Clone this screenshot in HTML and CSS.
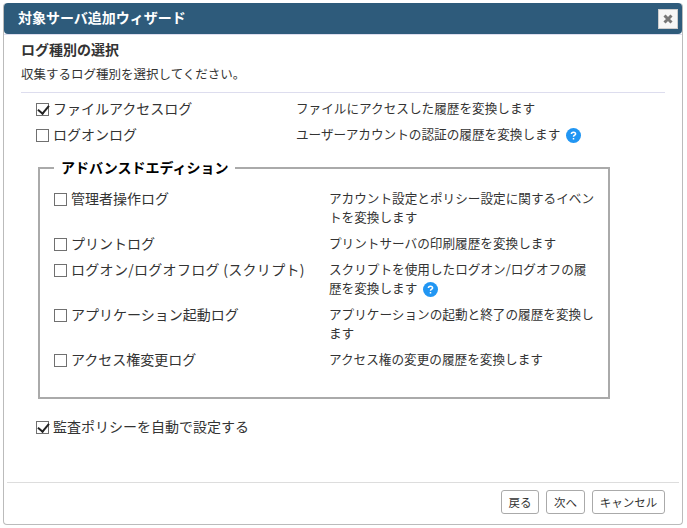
FILE: index.html
```html
<!DOCTYPE html>
<html lang="ja">
<head>
    <meta charset="UTF-8">
    <meta name="viewport" content="width=device-width, initial-scale=1.0">
    <title>対象サーバ追加ウィザード</title>
    <link rel="stylesheet" href="styles.css">
</head>
<body>

<div class="dialog">
    <div class="dialog-header">
        <h1>対象サーバ追加ウィザード</h1>
        <button class="close" aria-label="閉じる">
            <svg width="10" height="10" viewBox="0 0 10 10"><path d="M1.5 1.5L8.5 8.5M8.5 1.5L1.5 8.5"/></svg>
        </button>
    </div>

    <div class="dialog-body">
        <h2>ログ種別の選択</h2>
        <p class="lead">収集するログ種別を選択してください。</p>

        <div class="options">
            <div class="row">
                <label><input type="checkbox" checked>ファイルアクセスログ</label>
                <p>ファイルにアクセスした履歴を変換します</p>
            </div>
            <div class="row">
                <label><input type="checkbox">ログオンログ</label>
                <p>ユーザーアカウントの認証の履歴を変換します<svg class="help" viewBox="0 0 15 15"><circle cx="7.5" cy="7.5" r="7.5"/><path d="M5.4 6Q5.4 4.2 7.5 4.2T9.6 6C9.6 7.2 7.5 7.3 7.5 8.8M7.5 10.1V11.6"/></svg></p>
            </div>
        </div>

        <fieldset>
            <legend>アドバンスドエディション</legend>
            <div class="row">
                <label><input type="checkbox">管理者操作ログ</label>
                <p>アカウント設定とポリシー設定に関するイベン<br>トを変換します</p>
            </div>
            <div class="row">
                <label><input type="checkbox">プリントログ</label>
                <p>プリントサーバの印刷履歴を変換します</p>
            </div>
            <div class="row">
                <label class="script-log"><input type="checkbox">ログオン/ログオフログ (スクリプト)</label>
                <p>スクリプトを使用したログオン/ログオフの履<br>歴を変換します<svg class="help" viewBox="0 0 15 15"><circle cx="7.5" cy="7.5" r="7.5"/><path d="M5.4 6Q5.4 4.2 7.5 4.2T9.6 6C9.6 7.2 7.5 7.3 7.5 8.8M7.5 10.1V11.6"/></svg></p>
            </div>
            <div class="row">
                <label><input type="checkbox">アプリケーション起動ログ</label>
                <p>アプリケーションの起動と終了の履歴を変換し<br>ます</p>
            </div>
            <div class="row">
                <label><input type="checkbox">アクセス権変更ログ</label>
                <p>アクセス権の変更の履歴を変換します</p>
            </div>
        </fieldset>

        <label class="policy"><input type="checkbox" checked>監査ポリシーを自動で設定する</label>
    </div>

    <div class="dialog-footer">
        <button>戻る</button>
        <button>次へ</button>
        <button>キャンセル</button>
    </div>
</div>

</body>
</html>
```
FILE: styles.css
```css
* {
    margin: 0;
    padding: 0;
    box-sizing: border-box;
}

body {
    padding: 3px;
    background: #fff;
    color: #333;
    font-family: "Noto Sans CJK JP", sans-serif;
    font-size: 14px;
}

.dialog {
    display: flex;
    flex-direction: column;
    width: 680px;
    height: 522px;
    border: 1px solid #bbb;
    border-top: none;
    border-radius: 4px;
}

.dialog-header {
    display: flex;
    align-items: center;
    justify-content: space-between;
    height: 31px;
    padding: 0 4px 0 14px;
    border-radius: 4px;
    background: #2e5b7b;
    color: #fff;
}

h1,
h2 {
    font-size: 14px;
    font-weight: 700;
    line-height: 20px;
}

h1 {
    padding-bottom: 3px;
}

.close {
    display: flex;
    align-items: center;
    justify-content: center;
    width: 20px;
    height: 20px;
    border: 1px solid #ccc;
    background: #f6f6f6;
}

.close path {
    fill: none;
    stroke: #777;
    stroke-width: 3;
}

.dialog-body {
    flex: 1;
    padding: 4px 17px 0;
    border-top: 1px solid #dde;
}

.lead {
    height: 34px;
    padding-top: 5px;
    border-bottom: 1px solid #dde;
    font-size: 12.5px;
    line-height: 19px;
}

.options {
    padding: 5px 0 0 15px;
}

.row {
    display: grid;
    grid-template-columns: 260px 1fr;
    margin-bottom: 7px;
}

.row p {
    font-size: 12.64px;
    line-height: 19px;
    white-space: nowrap;
}

label {
    display: flex;
    align-items: center;
    gap: 4px;
    height: 19px;
    margin-top: 1px;
    line-height: 19px;
    white-space: nowrap;
}

.row label {
    margin-bottom: -1px;
}

input {
    appearance: none;
    width: 13px;
    height: 13px;
    margin-top: 2px;
    border: 1px solid #707070;
    background: #fff;
}

/* tick mark */
input:checked::before {
    content: "";
    display: block;
    width: 9px;
    height: 5px;
    margin: 2px 0 0 1px;
    border: solid #222;
    border-width: 0 0 2px 2px;
    transform: translateY(-1px) rotate(-50deg);
}

.script-log {
    letter-spacing: 0.3px;
}

.help {
    width: 15px;
    height: 15px;
    margin-left: 6px;
    vertical-align: -4px;
}

.help circle {
    fill: #2196f3;
}

.help path {
    fill: none;
    stroke: #fff;
    stroke-width: 1.5;
}

fieldset {
    width: 572px;
    height: 241px;
    margin: 15px 0 0 17px;
    padding: 10px 14px 0;
    border: 2px solid #aaa;
}

legend {
    padding: 0 7px 2px;
    color: #000;
    font-weight: 700;
    line-height: 18px;
}

fieldset .row {
    grid-template-columns: 275px 1fr;
}

.policy {
    margin: 18px 0 0 15px;
}

.policy input {
    margin-top: 1px;
}

.dialog-footer {
    display: flex;
    justify-content: flex-end;
    gap: 7px;
    height: 42px;
    margin: 0 3px;
    padding: 7px 14px 0 0;
    border-top: 1px solid #ddd;
}

.dialog-footer button {
    height: 24px;
    padding: 0 6.8px;
    border: 1px solid #aaa;
    border-radius: 3px;
    background: #fff;
    color: #333;
    font-family: inherit;
    font-size: 11.5px;
    line-height: 20px;
}
```
